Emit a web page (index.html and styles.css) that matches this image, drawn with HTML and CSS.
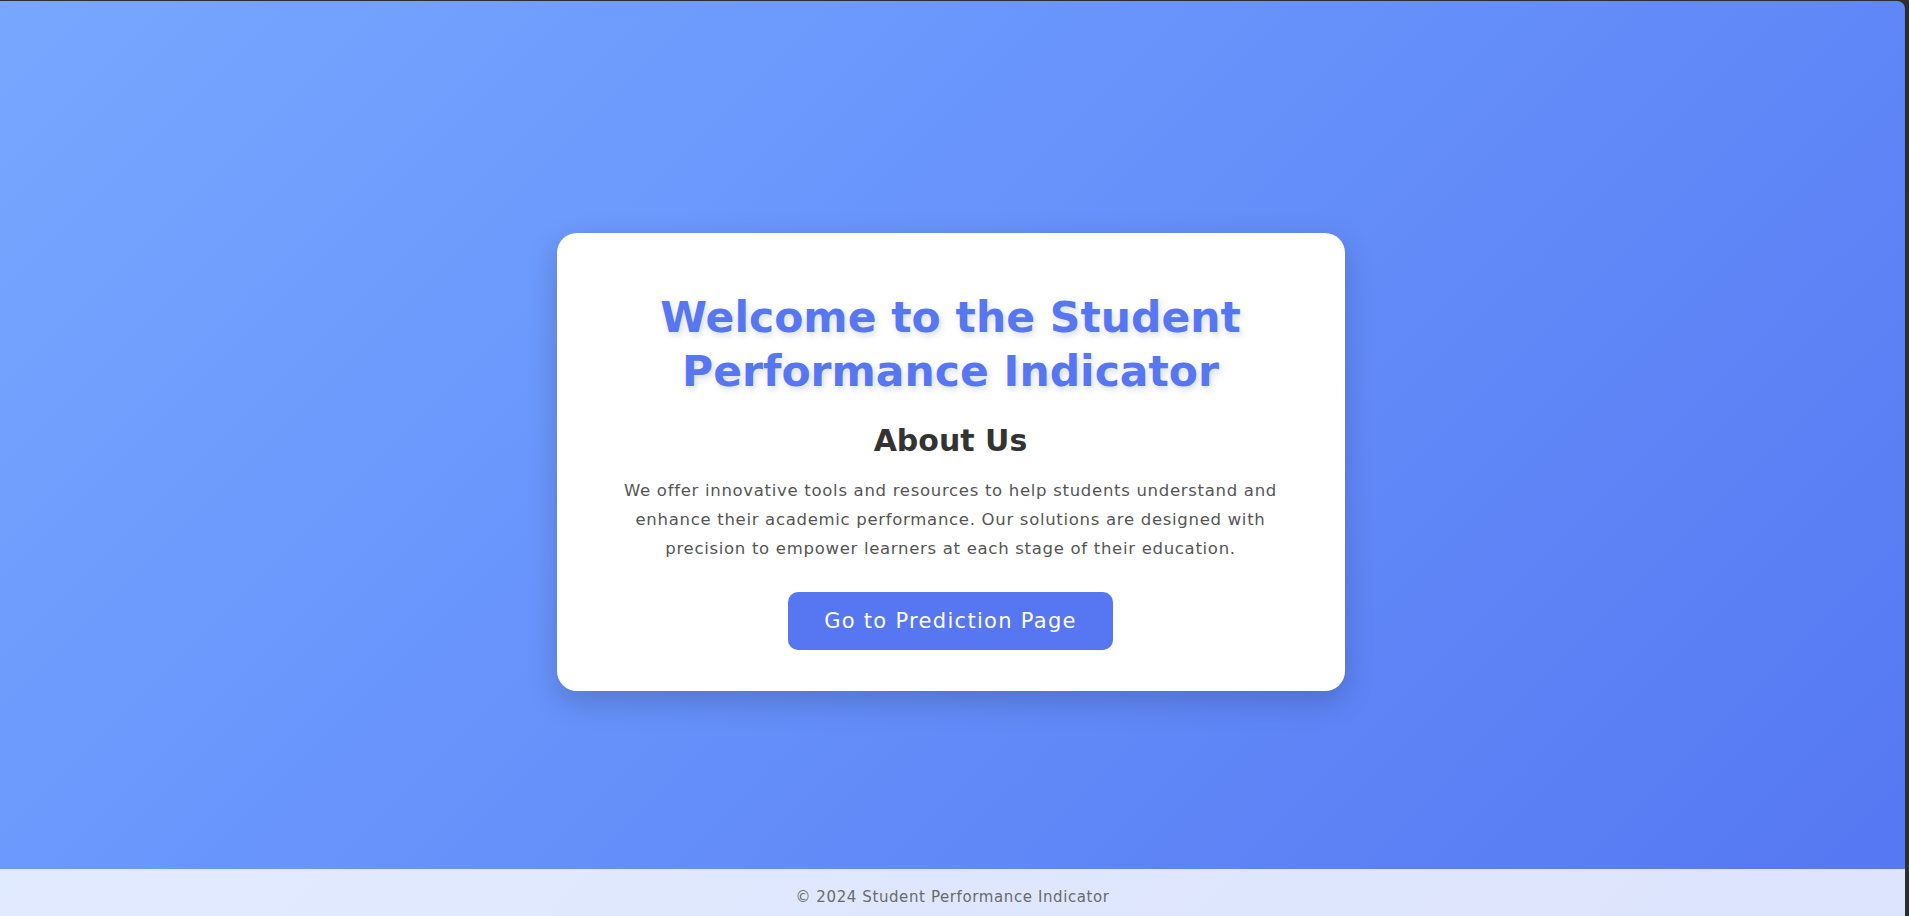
FILE: index.html
```html
<!DOCTYPE html>
<html lang="en">
<head>
<meta charset="utf-8">
<title>Student Performance Indicator</title>
<link rel="stylesheet" href="styles.css">
</head>
<body>
<div class="window">
  <main class="main">
    <section class="card">
      <h1 class="title">Welcome to the Student Performance Indicator</h1>
      <h2 class="subtitle">About Us</h2>
      <p class="text">We offer innovative tools and resources to help students understand and enhance their academic performance. Our solutions are designed with precision to empower learners at each stage of their education.</p>
      <a class="btn" href="#">Go to Prediction Page</a>
    </section>
  </main>
  <footer class="footer">© 2024 Student Performance Indicator</footer>
</div>
</body>
</html>
```
FILE: styles.css
```css
html, body {
  margin: 0;
  padding: 0;
  height: 100%;
}
body {
  background: #2e2e2e;
  font-family: "DejaVu Sans", "Open Sans", sans-serif;
  overflow: hidden;
}
.window {
  margin: 1px 4px 0 0;
  height: 915px;
  border-top-right-radius: 8px;
  overflow: hidden;
  display: flex;
  flex-direction: column;
  background: linear-gradient(135deg, #77a7ff 0%, #6a97fc 35%, #5577f2 100%);
}
.main {
  flex: 1;
  display: flex;
  align-items: center;
  justify-content: center;
  padding: 54px 4px 0 0;
  box-sizing: border-box;
}
.card {
  width: 788px;
  box-sizing: border-box;
  background: #fff;
  border-radius: 20px;
  box-shadow: 0 10px 30px rgba(0, 0, 0, 0.18);
  padding: 58px 50px 41px;
  text-align: center;
  display: flex;
  flex-direction: column;
  align-items: center;
}
.title {
  margin: 0;
  font-size: 42.5px;
  line-height: 54px;
  font-weight: bold;
  color: #5677f1;
  text-shadow: 2px 3px 6px rgba(60, 80, 180, 0.2);
}
.subtitle {
  margin: 24px 0 0;
  font-size: 30px;
  line-height: 36px;
  font-weight: bold;
  color: #333;
}
.text {
  margin: 17px 0 0;
  font-size: 16.5px;
  line-height: 29px;
  letter-spacing: 0.7px;
  color: #555;
  max-width: 672px;
}
.btn {
  margin-top: 29px;
  display: inline-block;
  background: #5677f1;
  color: #fff;
  text-decoration: none;
  font-size: 21px;
  line-height: 24px;
  letter-spacing: 1.3px;
  padding: 17px 36px;
  border-radius: 10px;
}
.footer {
  height: 47px;
  flex: none;
  display: flex;
  align-items: center;
  justify-content: center;
  background: rgba(255, 255, 255, 0.8);
  color: #6a6a6a;
  font-size: 15px;
  letter-spacing: 0.6px;
  padding-top: 8px;
  box-sizing: border-box;
}
```
